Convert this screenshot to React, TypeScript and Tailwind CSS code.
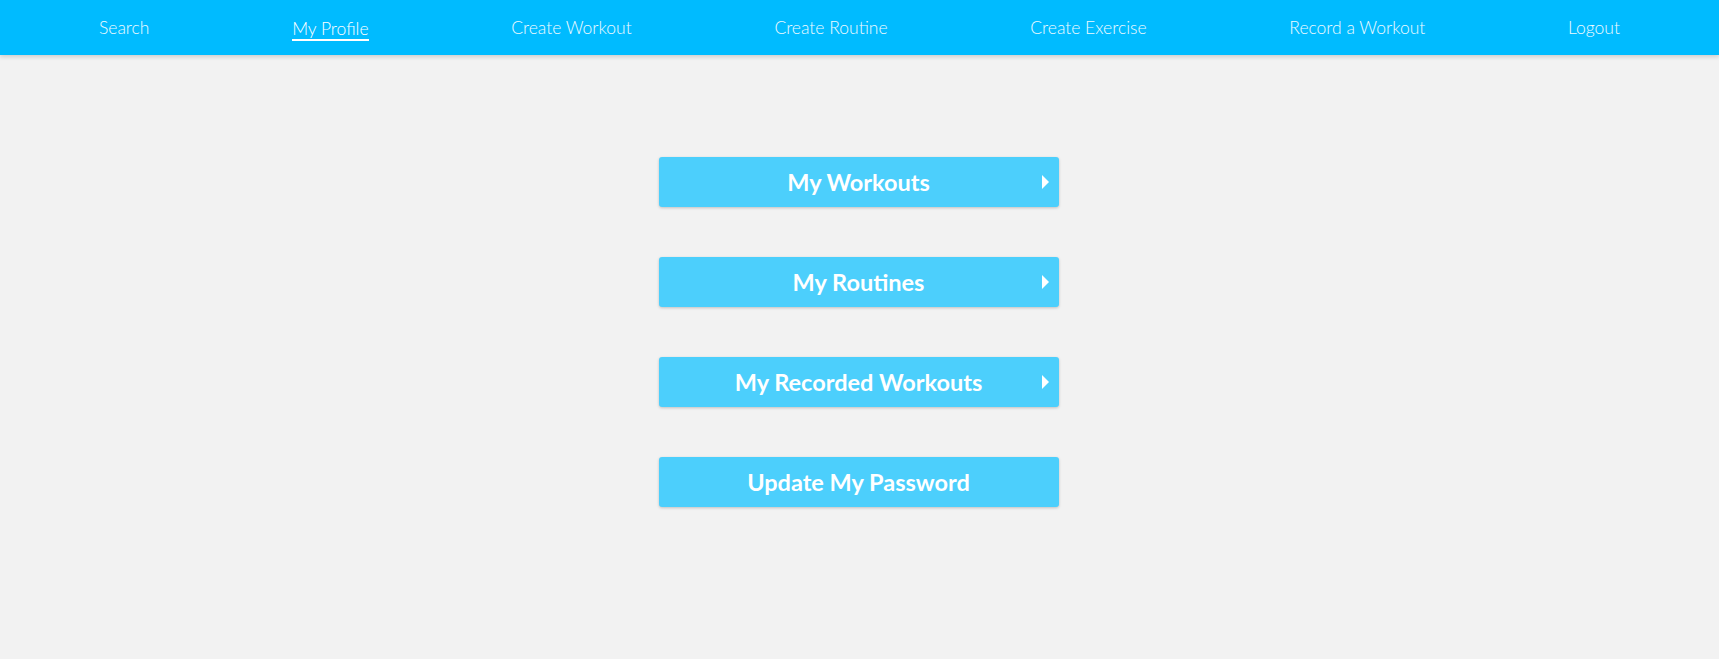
import React from "react";

const navItems = [
  "Search",
  "My Profile",
  "Create Workout",
  "Create Routine",
  "Create Exercise",
  "Record a Workout",
  "Logout",
];

function ProfileButton({ label, arrow = true }: { label: string; arrow?: boolean }) {
  return (
    <button className="relative flex h-[50px] w-[400px] items-center justify-center rounded-[3px] bg-[#4ccffc] pt-[2px] text-[23.5px] font-bold text-white shadow-[0_1px_3px_rgba(0,0,0,0.2)]">
      {label}
      {arrow && (
        <span className="absolute right-[10px] top-1/2 h-0 w-0 -translate-y-1/2 border-y-[7px] border-l-[7px] border-y-transparent border-l-white" />
      )}
    </button>
  );
}

export default function App() {
  return (
    <div
      className="min-h-[659px] bg-[#f2f2f2]"
      style={{ fontFamily: "Lato, 'Open Sans', sans-serif" }}
    >
      {/* top nav */}
      <nav className="flex h-[55px] items-center justify-between bg-[#00bbff] px-[99px] pt-[2px] shadow-[0_2px_4px_rgba(0,0,0,0.15)]">
        {navItems.map((item) => (
          <a
            key={item}
            className={
              item === "My Profile"
                ? "border-b-2 border-white pt-[2px] text-[17.5px] font-light leading-[20px] text-white"
                : "text-[17.5px] font-light text-[#eefaff]"
            }
          >
            {item}
          </a>
        ))}
      </nav>

      {/* profile actions */}
      <div className="flex flex-col items-center gap-[50px] pr-[2px] pt-[102px]">
        <ProfileButton label="My Workouts" />
        <ProfileButton label="My Routines" />
        <ProfileButton label="My Recorded Workouts" />
        <ProfileButton label="Update My Password" arrow={false} />
      </div>
    </div>
  );
}
